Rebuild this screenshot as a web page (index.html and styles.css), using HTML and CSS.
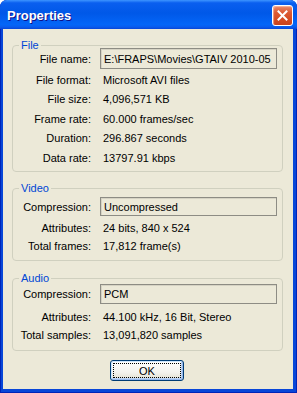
FILE: index.html
```html
<!DOCTYPE html>
<html lang="en">
<head>
    <meta charset="UTF-8">
    <meta name="viewport" content="width=device-width, initial-scale=1.0">
    <title>Properties</title>
    <link rel="stylesheet" href="styles.css">
</head>
<body>

<div class="window">
    <!-- Title bar -->
    <div class="titlebar">
        <span class="title">Properties</span>
        <button class="close-button" aria-label="Close">
            <svg width="19" height="19" viewBox="0 0 19 19">
                <path d="M5.5 5.5 L13.5 13.5 M13.5 5.5 L5.5 13.5" stroke="#fff" stroke-width="2" stroke-linecap="square" fill="none"/>
            </svg>
        </button>
    </div>

    <div class="client">
        <!-- File -->
        <fieldset class="group group-file">
            <legend>File</legend>
            <div class="row edit">
                <span class="label">File name:</span>
                <div class="box">E:\FRAPS\Movies\GTAIV 2010-05</div>
            </div>
            <div class="row"><span class="label">File format:</span><span class="value">Microsoft AVI files</span></div>
            <div class="row"><span class="label">File size:</span><span class="value">4,096,571 KB</span></div>
            <div class="row"><span class="label">Frame rate:</span><span class="value">60.000 frames/sec</span></div>
            <div class="row"><span class="label">Duration:</span><span class="value">296.867 seconds</span></div>
            <div class="row"><span class="label">Data rate:</span><span class="value">13797.91 kbps</span></div>
        </fieldset>

        <!-- Video -->
        <fieldset class="group group-video">
            <legend>Video</legend>
            <div class="row edit">
                <span class="label">Compression:</span>
                <div class="box">Uncompressed</div>
            </div>
            <div class="row"><span class="label">Attributes:</span><span class="value">24 bits, 840 x 524</span></div>
            <div class="row"><span class="label">Total frames:</span><span class="value">17,812 frame(s)</span></div>
        </fieldset>

        <!-- Audio -->
        <fieldset class="group group-audio">
            <legend>Audio</legend>
            <div class="row edit">
                <span class="label">Compression:</span>
                <div class="box">PCM</div>
            </div>
            <div class="row"><span class="label">Attributes:</span><span class="value">44.100 kHz, 16 Bit, Stereo</span></div>
            <div class="row"><span class="label">Total samples:</span><span class="value">13,091,820 samples</span></div>
        </fieldset>

        <div class="buttons">
            <button class="ok-button">OK</button>
        </div>
    </div>
</div>

</body>
</html>
```

FILE: styles.css
```css
body {
    margin: 0;
    background-color: #ffffff;
    font-family: 'Liberation Sans', Arial, sans-serif;
    font-size: 11px;
    color: #000;
}

.window {
    width: 297px;
    height: 393px;
    display: flex;
    flex-direction: column;
    background-color: #0846d8;
    border-radius: 7px 7px 0 0;
    box-shadow: inset 0 0 0 1px #0024b8;
    overflow: hidden;
}

/* Title bar */
.titlebar {
    height: 29px;
    flex-shrink: 0;
    display: flex;
    align-items: center;
    padding: 0 4px 0 7px;
    background: linear-gradient(to bottom, #3d95ff 0%, #0a5fef 10%, #0058e8 45%, #0466f8 85%, #0a5ced 93%, #0846d8 100%);
}

.title {
    color: #fff;
    font-weight: bold;
    font-size: 13px;
    text-shadow: 1px 1px #0f1089;
    padding-top: 1px;
}

.close-button {
    margin-left: auto;
    width: 21px;
    height: 21px;
    padding: 0;
    border: 1px solid #fff;
    border-radius: 3px;
    background: linear-gradient(to bottom, #e98a6c 0%, #dc5a33 35%, #d34a22 75%, #c8431e 100%);
    box-shadow: inset 1px 1px 1px rgba(255, 210, 190, 0.6);
    display: flex;
    align-items: center;
    justify-content: center;
    margin-top: 1px;
}

/* Dialog client area */
.client {
    flex: 1;
    margin: 0 4px 4px 3px;
    background-color: #ece9d8;
    padding: 10px 10px 0 9px;
    display: flex;
    flex-direction: column;
}

/* Group boxes */
.group {
    margin: 0;
    padding: 0 5px 0 0;
    border: 1px solid #d0d0bf;
    border-radius: 4px;
    min-inline-size: 0;
}

.group legend {
    color: #0046d5;
    margin-left: 6px;
    padding: 0 2px;
    line-height: 12px;
}

.row {
    display: grid;
    grid-template-columns: 78px 1fr;
    column-gap: 9px;
    align-items: center;
    height: 18px;
}

.row.edit {
    height: auto;
}

.group-file {
    padding-bottom: 3.5px;
}

.group-file .row {
    height: 19.5px;
}

.group-file .row.edit {
    height: 21px;
    margin-top: -3px;
    margin-bottom: 1px;
}

.group-video {
    margin-top: 10px;
    padding-bottom: 5px;
}

.group-video .edit {
    margin-top: 3px;
    margin-bottom: 3px;
}

.group-video .box {
    height: 19px;
}

.group-audio {
    margin-top: 11px;
    padding-bottom: 6px;
}

.group-audio .edit {
    margin-bottom: 4px;
}

.label {
    text-align: right;
    white-space: nowrap;
}

.value {
    padding-left: 3px;
    white-space: nowrap;
}

.box {
    box-sizing: border-box;
    height: 20px;
    border: 1px solid #8d8c84;
    box-shadow: inset 1px 1px #d6d3c4;
    padding: 0 3px;
    display: flex;
    align-items: center;
    white-space: nowrap;
    overflow: hidden;
}

.group-file .box {
    height: 21px;
}

/* OK button */
.buttons {
    display: flex;
    justify-content: center;
    margin-top: 9px;
    padding-right: 1px;
}

.ok-button {
    width: 74px;
    height: 21px;
    border: 1px solid #003c74;
    border-radius: 3px;
    background: linear-gradient(to bottom, #ffffff 0%, #f3f2ed 60%, #e6e3d6 90%, #d6d0c5 100%);
    box-shadow: inset -1px -1px #98b8ea, inset 1px 1px #cee7ff, inset -2px -2px #bcd4f6;
    font-family: 'Liberation Sans', Arial, sans-serif;
    font-size: 11px;
    color: #000;
    padding: 0;
    outline: 1px dotted #000;
    outline-offset: -4px;
}
```
